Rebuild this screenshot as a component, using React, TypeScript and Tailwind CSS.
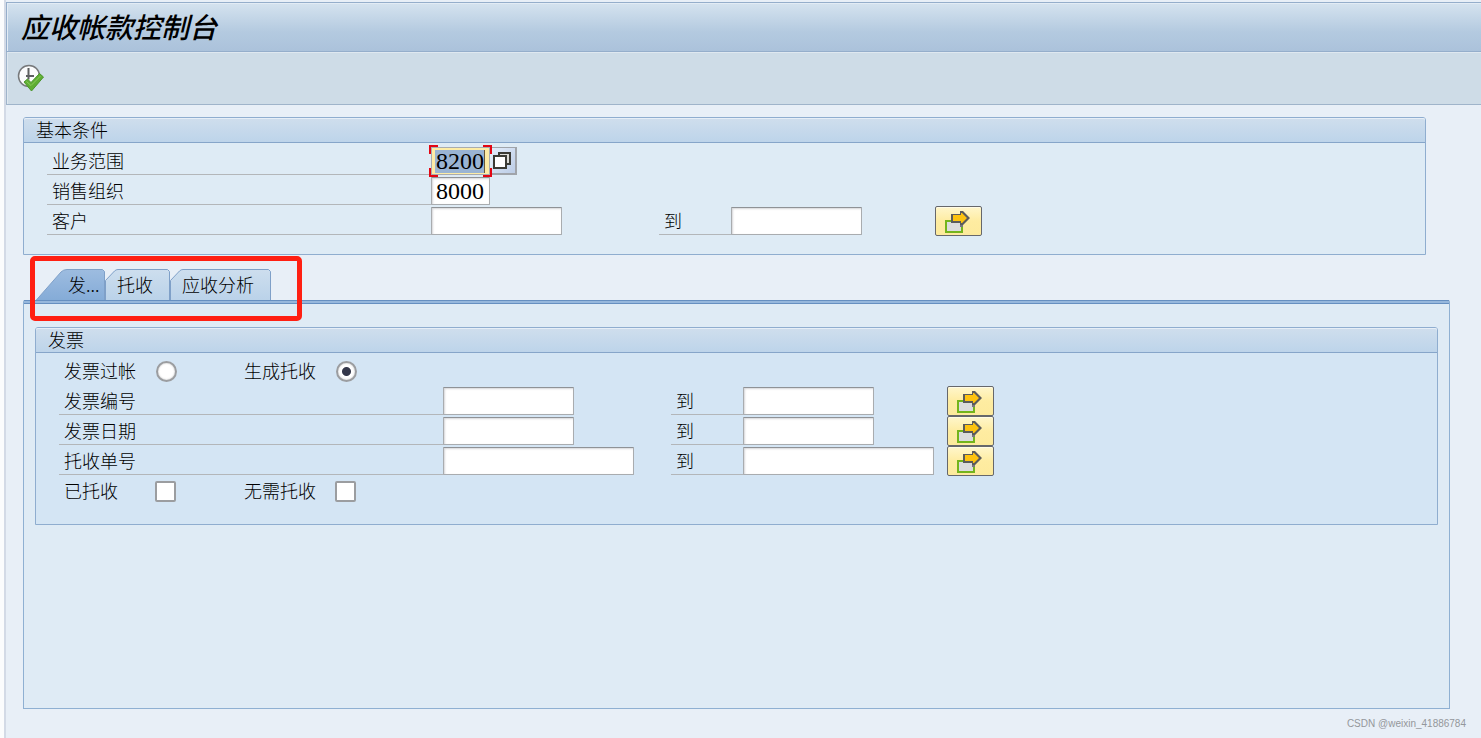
import { useState } from "react";

const tabs = [
  { label: "发...", width: 71, path: "M0.5 32 L26 3 Q28.5 0.5 32 0.5 H67.5 L69.5 2.5 V32", className: "w-[70px] pl-[33px]" },
  { label: "托收", width: 66, path: "M0.5 32 V11.5 L9.5 2 Q11 0.5 13 0.5 H62.5 L64.5 2.5 V32", className: "w-[65px] pl-[12px]" },
  { label: "应收分析", width: 102, path: "M0.5 32 V11.5 L9.5 2 Q11 0.5 13 0.5 H98.5 L100.5 2.5 V32", className: "w-[101px] pl-[12px]" },
];

const invoiceRows = [
  { id: "invoice-no", label: "发票编号", wide: false },
  { id: "invoice-date", label: "发票日期", wide: false },
  { id: "collection-no", label: "托收单号", wide: true },
];

const inputStyle =
  "h-[28px] block bg-white border border-[#a9acaf] border-t-[#8f9296] rounded-[1px] px-1 outline-none shadow-[inset_1px_1px_2px_#d5d5d8] font-['Liberation_Serif',serif] text-[24px] leading-[26px] text-black";

const ExecuteIcon = () => (
  <svg className="w-[28px] h-[28px]" viewBox="0 0 28 28" fill="none" aria-hidden="true">
    <circle cx="12" cy="12" r="10.5" fill="#fbfcfd" stroke="#77797b" strokeWidth="1.5" />
    <path d="M11.5 4V15.5M9 12H17" stroke="#5d5f61" strokeWidth="2" />
    <path d="M7 18L10.5 15L14 18.5L22.5 9.5L26.5 13L14.5 27Z" fill="#5fae33" stroke="#4a962c" strokeWidth="1" strokeLinejoin="round" />
    <path d="M9.5 17.5L14 21.5L23.5 12" stroke="#8ccc5c" strokeWidth="1" />
  </svg>
);

const MultipleIcon = () => (
  <svg className="w-[25px] h-[23px] mr-[3px]" viewBox="0 0 25 23" fill="none" aria-hidden="true">
    <rect x="1" y="11" width="16" height="11" fill="#dcdcdc" stroke="#74b41c" strokeWidth="2" />
    <path d="M15 12H18V17H15Z" fill="#77777c" />
    <path d="M6 4H15V1H18L25 8L18 15H15V13H6Z" fill="#5b5b5b" />
    <path d="M8 5H16V3H17L22 8L17 13H16V11H8Z" fill="#fdc20f" />
  </svg>
);

const SearchHelpIcon = () => (
  <svg className="w-[18px] h-[17px] mr-[3px]" viewBox="0 0 18 17" fill="none" aria-hidden="true">
    <rect x="6" y="1" width="11" height="11" fill="#dcdcd8" stroke="#3b3b35" strokeWidth="2" />
    <rect x="1" y="4" width="12" height="12" fill="#fff" stroke="#3b3b35" strokeWidth="2" />
  </svg>
);

interface PanelProps {
  title: string;
  className: string;
  children: React.ReactNode;
}

const Panel: React.FC<PanelProps> = ({ title, className, children }) => (
  <section className={`border border-[#8fadcf] rounded-t-[3px] ${className}`}>
    <h2 className="h-[25px] pl-[12px] border-b border-[#86a5c9] rounded-t-[2px] bg-linear-to-b from-[#cfdeed] to-[#bdd4ea] shadow-[inset_0_1px_0_#e6eef7] leading-[22px]">{title}</h2>
    <div className="pt-[2px] pb-[19px] px-[23px]">{children}</div>
  </section>
);

interface RangeRowProps {
  id: string;
  label: string;
  wide?: boolean;
}

const RangeRow: React.FC<RangeRowProps> = ({ id, label, wide }) => (
  <div className="flex items-end h-[30px]">
    <label htmlFor={id} className="w-[384px] h-[30px] pl-[5px] pt-px border-b border-[#b3b6b9] leading-[28px]">
      {label}
    </label>
    <div className="w-[228px]">
      <input id={id} type="text" className={`${inputStyle} ${wide ? "w-[191px]" : "w-[131px]"}`} />
    </div>
    <label htmlFor={`${id}-to`} className="w-[72px] h-[30px] pl-[5px] pt-px border-b border-[#b3b6b9] leading-[28px]">
      到
    </label>
    <div className="w-[204px]">
      <input id={`${id}-to`} type="text" className={`${inputStyle} ${wide ? "w-[191px]" : "w-[131px]"}`} />
    </div>
    <button
      type="button"
      aria-label={`${label} 多项选择`}
      className="w-[47px] h-[30px] -mb-px flex items-center justify-center border border-[#66676b] rounded-[2px] bg-linear-to-b from-[#fff6cb] via-[#feeca1] to-[#fdea9c] shadow-[inset_0_1px_0_#fffbe6]"
    >
      <MultipleIcon />
    </button>
  </div>
);

const App = () => {
  const [active, setActive] = useState(0);
  const [mode, setMode] = useState("collect");

  return (
    <div className="min-h-screen flex flex-col bg-[#fbfcfd] pl-[4px] font-['Noto_Sans_CJK_SC',sans-serif] font-light text-[18px] text-black">
      <div className="flex-1 flex flex-col border-l-2 border-[#d3dae6] bg-[#e8eff7]">
        <header className="mt-[2px] h-[50px] pl-[14px] border-y border-l border-[#95aecb] bg-linear-to-b from-[#d5e3ef] via-[#b4cae0] via-60% to-[#abc2db] shadow-[inset_1px_1px_0_#e3ecf5]">
          <h1 className="text-[28px] leading-[46px] font-medium italic">应收帐款控制台</h1>
        </header>
        <div className="h-[53px] pl-[10px] flex items-center border-b border-l border-[#9fb4ca] bg-[#cedce7] shadow-[inset_1px_1px_0_#dfe8f0]">
          <button type="button" aria-label="执行">
            <ExecuteIcon />
          </button>
        </div>

        <main className="flex-1 flex flex-col pt-[12px] pl-[17px] pr-[31px]">
          <Panel title="基本条件" className="mr-[24px] bg-[#deebf5]">
            <div className="flex items-end h-[30px]">
              <label htmlFor="area" className="w-[384px] h-[30px] pl-[5px] pt-px border-b border-[#b3b6b9] leading-[28px]">
                业务范围
              </label>
              <div className="relative">
                <div className="bg-[#fdeca6] border border-[#a9acaf] h-[28px] w-[59px] pt-[2px] pl-[3px]">
                  <input id="area" type="text" defaultValue="8200" className="block w-[50px] h-[23px] pl-px bg-[#9ab4d3] border-r border-[#6b5a3a] outline-none font-['Liberation_Serif',serif] text-[24px] leading-[23px]" />
                </div>
                <span className="absolute -left-[2px] -top-[2px] size-[9px] border-t-2 border-l-2 border-[#e30613]" />
                <span className="absolute -right-[2px] -top-[2px] size-[9px] border-t-2 border-r-2 border-[#e30613]" />
                <span className="absolute -left-[2px] -bottom-[2px] size-[9px] border-b-2 border-l-2 border-[#e30613]" />
                <span className="absolute -right-[2px] -bottom-[2px] size-[9px] border-b-2 border-r-2 border-[#e30613]" />
              </div>
              <button type="button" aria-label="搜索帮助" className="ml-[2px] w-[25px] h-[28px] flex items-center justify-center bg-linear-to-br from-[#e3ecfa] to-[#bccde6] border-t border-r-2 border-b-2 border-[#a0a4aa]">
                <SearchHelpIcon />
              </button>
            </div>
            <div className="flex items-end h-[30px]">
              <label htmlFor="org" className="w-[384px] h-[30px] pl-[5px] pt-px border-b border-[#b3b6b9] leading-[28px]">
                销售组织
              </label>
              <input id="org" type="text" defaultValue="8000" className={`${inputStyle} w-[59px]`} />
            </div>
            <RangeRow id="customer" label="客户" />
          </Panel>

          <div className="relative mt-[14px] pl-[12px]">
            <div role="tablist" className="flex">
              {tabs.map((tab, idx) => (
                <button
                  key={tab.label}
                  type="button"
                  role="tab"
                  aria-selected={active === idx}
                  onClick={() => setActive(idx)}
                  className={`relative h-[31px] text-left whitespace-nowrap leading-[31px] ${tab.className}`}
                >
                  <svg className="absolute left-0 top-0" width={tab.width} height="31" fill="none" aria-hidden="true">
                    <defs>
                      <linearGradient id={`tab-${idx}`} x1="0" y1="0" x2="0" y2="1">
                        <stop offset="0" stopColor={active === idx ? "#9dbce0" : "#cddeee"} />
                        <stop offset="1" stopColor={active === idx ? "#84abd7" : "#bad2e9"} />
                      </linearGradient>
                    </defs>
                    <path d={tab.path} fill={`url(#tab-${idx})`} stroke="#7fa0c8" />
                  </svg>
                  <span className="relative">{tab.label}</span>
                </button>
              ))}
            </div>
            <div className="absolute left-[7px] -top-[13px] w-[272px] h-[65px] border-[5px] border-[#ff1f12] rounded-[5px] pointer-events-none z-10" />
          </div>

          <div className="flex-1 border border-t-0 border-[#8fb0d2] bg-[#dfebf5] rounded-t-[2px]">
            <div className="h-[4px] border-y border-[#668fc0] bg-[#96b7dc]" />
            <div className="pt-[23px] px-[11px]">
              <Panel title="发票" className="bg-[#d4e5f4]">
                <div className="flex items-center h-[30px] pl-[5px] pt-[2px]">
                  <label htmlFor="post" className="w-[92px] pb-[2px]">
                    发票过帐
                  </label>
                  <input id="post" type="radio" name="mode" checked={mode === "post"} onChange={() => setMode("post")} className="appearance-none size-[21px] rounded-full border-2 border-[#9b9da0] bg-white shadow-[inset_0_0_2px_#bbb] checked:bg-[radial-gradient(circle,#34384b_4px,#fff_5px)]" />
                  <label htmlFor="collect" className="ml-[67px] w-[92px] pb-[2px]">
                    生成托收
                  </label>
                  <input id="collect" type="radio" name="mode" checked={mode === "collect"} onChange={() => setMode("collect")} className="appearance-none size-[21px] rounded-full border-2 border-[#9b9da0] bg-white shadow-[inset_0_0_2px_#bbb] checked:bg-[radial-gradient(circle,#34384b_4px,#fff_5px)]" />
                </div>
                {invoiceRows.map((row) => (
                  <RangeRow key={row.id} {...row} />
                ))}
                <div className="flex items-center h-[30px] pl-[5px] pt-[2px]">
                  <label htmlFor="collected" className="w-[91px] pb-[2px]">
                    已托收
                  </label>
                  <input id="collected" type="checkbox" className="appearance-none size-[21px] rounded-[2px] border-2 border-[#9b9da0] bg-white checked:bg-[#34384b]" />
                  <label htmlFor="no-collect" className="ml-[68px] w-[91px] pb-[2px]">
                    无需托收
                  </label>
                  <input id="no-collect" type="checkbox" className="appearance-none size-[21px] rounded-[2px] border-2 border-[#9b9da0] bg-white checked:bg-[#34384b]" />
                </div>
              </Panel>
            </div>
          </div>
        </main>

        <footer className="h-[29px] pr-[15px] text-right font-['Liberation_Sans',sans-serif] font-normal text-[10px] leading-[29px] text-[#94979b]">CSDN @weixin_41886784</footer>
      </div>
    </div>
  );
};

export default App;
